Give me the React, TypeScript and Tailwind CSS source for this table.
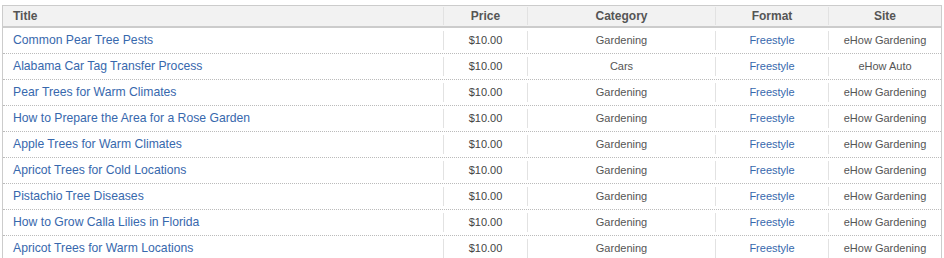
import React from "react";

const rows = [
  ["Common Pear Tree Pests", "Gardening", "eHow Gardening"],
  ["Alabama Car Tag Transfer Process", "Cars", "eHow Auto"],
  ["Pear Trees for Warm Climates", "Gardening", "eHow Gardening"],
  ["How to Prepare the Area for a Rose Garden", "Gardening", "eHow Gardening"],
  ["Apple Trees for Warm Climates", "Gardening", "eHow Gardening"],
  ["Apricot Trees for Cold Locations", "Gardening", "eHow Gardening"],
  ["Pistachio Tree Diseases", "Gardening", "eHow Gardening"],
  ["How to Grow Calla Lilies in Florida", "Gardening", "eHow Gardening"],
  ["Apricot Trees for Warm Locations", "Gardening", "eHow Gardening"],
];

function Cell({ children, className = "", header = false }: { children: React.ReactNode; className?: string; header?: boolean }) {
  return (
    <div className="flex items-center">
      <div className={header ? "w-px h-[18px] bg-[#e2e2e2]" : "w-px h-[19px] bg-[#e2e2e2]"} />
      <div className={"flex-1 text-center " + className}>{children}</div>
    </div>
  );
}

export default function App() {
  return (
    <div className="bg-white w-[944px] h-[258px] overflow-hidden pt-[5px] pl-[2px]" style={{ fontFamily: '"Liberation Sans", Arial, sans-serif' }}>
      <div className="w-[940px] border-l border-r border-t border-[#cccccc]">
        <div className="grid grid-cols-[440px_84px_188px_113px_113px] h-[22px] bg-[#f2f2f2] border-b-2 border-[#cccccc] text-[12px] font-bold text-[#555555]">
          <div className="flex items-center pl-[10px]">Title</div>
          <Cell header>Price</Cell>
          <Cell header>Category</Cell>
          <Cell header>Format</Cell>
          <Cell header>Site</Cell>
        </div>
        {rows.map(([title, cat, site], i) => (
          <div key={i} className="grid grid-cols-[440px_84px_188px_113px_113px] h-[26px] border-b border-dotted border-[#bbbbbb] text-[11px] text-[#555555]">
            <div className="flex items-center pl-[10px] pb-px text-[12.2px] text-[#3768ad]">{title}</div>
            <Cell className="text-[#444444]">$10.00</Cell>
            <Cell>{cat}</Cell>
            <Cell className="text-[#3768ad]">Freestyle</Cell>
            <Cell>{site}</Cell>
          </div>
        ))}
      </div>
    </div>
  );
}
